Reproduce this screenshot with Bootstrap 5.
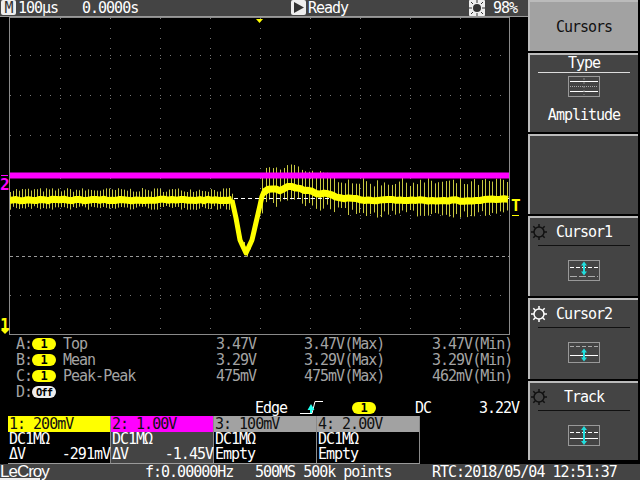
<!DOCTYPE html>
<html lang="en">
<head>
    <meta charset="UTF-8">
    <meta name="viewport" content="width=device-width, initial-scale=1">
    <title>Oscilloscope - Cursors</title>
    <link href="https://cdn.jsdelivr.net/npm/bootstrap@5.3.0/dist/css/bootstrap.min.css" rel="stylesheet">
    <style>
        body {
            margin: 0;
            background: #000;
            color: #fff;
            font-family: "DejaVu Sans Mono", "Liberation Mono", monospace;
            font-size: 15px;
            letter-spacing: -1px;
            line-height: 16px;
            overflow: hidden;
        }

        .sc-screen { width: 640px; height: 480px; overflow: hidden; }
        .sc-upper { height: 464px; }
        .sc-left { width: 528px; }
        .sc-nowrap { white-space: nowrap; }

        /* Top bar */
        .sc-topbar {
            height: 17px;
            padding-left: 1px;
            background: #444;
            border-bottom: 1px solid #9a9a9a;
        }
        .sc-tag {
            width: 15px;
            height: 15px;
            background: #eee;
            border-radius: 2px;
            color: #333;
        }
        .sc-tb-time { width: 64px; margin-left: 2px; }
        .sc-tb-pos { width: 209px; }
        .sc-tb-run { width: 161px; margin-left: 2px; }
        .sc-tb-pct { margin-left: 8px; }

        .sc-plot { display: block; width: 528px; height: 318px; flex: none; }
        .sc-plot text { font-family: "DejaVu Sans Mono", monospace; font-size: 16px; font-weight: 700; }

        /* Measurements */
        .sc-meas {
            display: grid;
            grid-template-columns: 16px 31px 153px 88px 128px 1fr;
            grid-auto-rows: 16px;
            padding: 1px 0 0 16px;
            color: #a4a4a4;
            height: 65px;
        }
        .sc-pill {
            display: block;
            width: 24px;
            height: 12px;
            margin-top: 2px;
            border-radius: 6px;
            background: #ff0;
            color: #000;
            text-align: center;
            font-size: 12px;
            letter-spacing: 0;
            line-height: 12px;
            font-weight: 700;
        }
        .sc-pill-off { background: #eee; font-size: 10.5px; letter-spacing: -1px; }

        /* Trigger row */
        .sc-trig { height: 16px; padding-left: 255px; }
        .sc-trig-edge { width: 45px; }
        .sc-trig-icon { width: 52px; }
        .sc-trig-pill { width: 63px; }
        .sc-trig-dc { width: 64px; }

        /* Channel boxes */
        .sc-channels { padding-left: 8px; }
        .sc-ch {
            width: 103px;
            height: 48px;
            border-right: 1px solid #8a8a8a;
            border-bottom: 1px solid #9a9a9a;
        }
        .sc-ch-head { height: 16px; color: #111; padding-left: 1px; }
        .sc-ch-line { height: 15px; line-height: 15px; padding-left: 1px; }
        .sc-c1 { background: #ff0; }
        .sc-c2 { background: #f0f; }
        .sc-c3 { background: #a2a2a2; }
        .sc-dim { background: #444; }

        /* Softkeys */
        .sc-side { width: 112px; padding: 0 2px 0 0; gap: 2px; }
        .sc-key {
            height: 80px;
            background: #444;
            border-top: 2px solid #bbb;
            border-left: 2px solid #bbb;
            position: relative;
        }
        .sc-key-short { height: 79px; }
        .sc-key-tall { height: 81px; }
        .sc-key-active {
            height: 51px;
            background: #a2a2a2;
            color: #111;
        }
        .sc-key-title { height: 17px; }
        .sc-key-title-low { height: 27px; padding-top: 6px; }
        .sc-key-rule { height: 1px; margin: 0 8px; background: #111; }
        .sc-key-rule-w { background: #ddd; }
        .sc-key-gear { position: absolute; left: 0; top: 5px; }
        .sc-key-icon { display: block; margin: 3px auto 0; }
        .sc-key-icon-low { margin-top: 14px; }
        .sc-key-value { margin-top: 10px; }

        /* Status bar */
        .sc-status { height: 16px; background: #444; }
        .sc-logo {
            width: 145px;
            font-family: "Liberation Sans", sans-serif;
            font-size: 17px;
            letter-spacing: -1px;
            line-height: 15px;
            height: 16px;
            position: relative;
        }
        .sc-logo::after {
            content: "";
            position: absolute;
            left: 0;
            bottom: 0;
            width: 40px;
            height: 2px;
            background: #eee;
        }
        .sc-st-f { width: 110px; }
        .sc-st-s { width: 177px; }
    </style>
</head>
<body>

<div class="sc-screen d-flex flex-column">
    <div class="sc-upper d-flex">
        <div class="sc-left d-flex flex-column">
            <!-- Top bar -->
            <div class="sc-topbar d-flex align-items-start sc-nowrap">
                <span class="sc-tag d-flex align-items-center justify-content-center">M</span>
                <span class="sc-tb-time">100μs</span>
                <span class="sc-tb-pos">0.0000s</span>
                <span class="sc-tag d-flex align-items-center justify-content-center">
                    <svg width="13" height="13" viewBox="0 0 13 13"><path d="M2 1 L12 6.5 L2 12 Z" fill="#333"/></svg>
                </span>
                <span class="sc-tb-run">Ready</span>
                <svg width="16" height="16" viewBox="0 0 16 16">
                    <rect width="16" height="16" fill="#eee" rx="1"/>
                    <circle cx="8" cy="8" r="4" fill="#333"/>
                    <path d="M8 0v3M8 13v3M0 8h3M13 8h3M2 2l2 2M12 12l2 2M14 2l-2 2M4 12l-2 2" stroke="#333" stroke-width="1"/>
                </svg>
                <span class="sc-tb-pct">98%</span>
            </div>

            <!-- Graticule and traces -->
            <svg id="plot" class="sc-plot" viewBox="0 17 528 318">
                <g id="grid"></g>
                <g id="spikes"></g>
                <line x1="10" y1="198.5" x2="510" y2="198.5" stroke="#fff" stroke-dasharray="4 3"/>
                <line x1="10" y1="256.5" x2="510" y2="256.5" stroke="#999" stroke-dasharray="3 3"/>
                <path id="trace" fill="none" stroke="#ff0" stroke-width="7" stroke-linejoin="round"/>
                <path id="dip" fill="none" stroke="#ff0" stroke-width="5" stroke-linejoin="round"/>
                <rect x="10" y="172.500" width="500" height="6" fill="#f0f"/>
                <rect x="9.5" y="17.5" width="500" height="317" fill="none" stroke="#8a8a8a"/>
                <path d="M256 19 h7 l-3.500 4 Z" fill="#ff0"/>
                <rect x="1" y="175" width="7" height="1" fill="#f0f"/>
                <text x="0" y="190" fill="#f0f">2</text>
                <text x="0" y="330" fill="#ff0">1</text>
                <path d="M1 330 h8 l-4 4 Z" fill="#ff0"/>
                <text x="511" y="211" fill="#ff0">T</text>
                <rect x="512" y="215" width="7" height="1" fill="#ff0"/>
            </svg>

            <!-- Measurements -->
            <div class="sc-meas sc-nowrap">
                <span>A:</span><span class="sc-pill">1</span><span>Top</span><span>3.47V</span><span>3.47V(Max)</span><span>3.47V(Min)</span>
                <span>B:</span><span class="sc-pill">1</span><span>Mean</span><span>3.29V</span><span>3.29V(Max)</span><span>3.29V(Min)</span>
                <span>C:</span><span class="sc-pill">1</span><span>Peak-Peak</span><span>475mV</span><span>475mV(Max)</span><span>462mV(Min)</span>
                <span>D:</span><span class="sc-pill sc-pill-off">Off</span><span></span><span></span><span></span><span></span>
            </div>

            <!-- Trigger -->
            <div class="sc-trig d-flex sc-nowrap">
                <span class="sc-trig-edge">Edge</span>
                <span class="sc-trig-icon">
                    <svg class="d-block" width="24" height="16" viewBox="0 0 24 16">
                        <path d="M0 13.500 H12 L15 1.500 H23" fill="none" stroke="#fff"/>
                        <path d="M7.500 10 L11 4 L14.500 10 Z M10 10 h2 v3 h-2 Z" fill="#2fe"/>
                    </svg>
                </span>
                <span class="sc-trig-pill"><span class="sc-pill">1</span></span>
                <span class="sc-trig-dc">DC</span>
                <span>3.22V</span>
            </div>

            <!-- Channels -->
            <div class="sc-channels d-flex sc-nowrap">
                <div class="sc-ch">
                    <div class="sc-ch-head sc-c1">1: 200mV</div>
                    <div class="sc-ch-line">DC1MΩ</div>
                    <div class="sc-ch-line d-flex justify-content-between"><span>ΔV</span><span>-291mV</span></div>
                </div>
                <div class="sc-ch sc-dim">
                    <div class="sc-ch-head sc-c2">2: 1.00V</div>
                    <div class="sc-ch-line">DC1MΩ</div>
                    <div class="sc-ch-line d-flex justify-content-between"><span>ΔV</span><span>-1.45V</span></div>
                </div>
                <div class="sc-ch">
                    <div class="sc-ch-head sc-c3">3: 100mV</div>
                    <div class="sc-ch-line">DC1MΩ</div>
                    <div class="sc-ch-line">Empty</div>
                </div>
                <div class="sc-ch">
                    <div class="sc-ch-head sc-c3">4: 2.00V</div>
                    <div class="sc-ch-line">DC1MΩ</div>
                    <div class="sc-ch-line">Empty</div>
                </div>
            </div>
        </div>

        <!-- Softkeys -->
        <div class="sc-side d-flex flex-column text-center">
            <div class="sc-key sc-key-active d-flex align-items-center justify-content-center">Cursors</div>
            <div class="sc-key sc-key-short">
                <div class="sc-key-title">Type</div>
                <div class="sc-key-rule sc-key-rule-w"></div>
                <svg class="sc-key-icon" width="32" height="21" viewBox="0 0 32 21">
                    <rect x=".5" y=".5" width="31" height="20" fill="none" stroke="#999"/>
                    <path d="M2 5.500h28M2 15.500h28" stroke="#fff"/>
                    <path d="M2 10.500h28" stroke="#aaa" stroke-dasharray="1 1"/>
                    <path d="M16 2v17" stroke="#888" stroke-dasharray="2 2"/>
                </svg>
                <div class="sc-key-value">Amplitude</div>
            </div>
            <div class="sc-key"></div>
            <div class="sc-key">
                <svg class="sc-key-gear" width="18" height="18" viewBox="0 0 18 18"><use href="#gear" stroke="#111"/></svg>
                <div class="sc-key-title-low">Cursor1</div>
                <div class="sc-key-rule"></div>
                <svg class="sc-key-icon sc-key-icon-low" width="32" height="21" viewBox="0 0 32 21">
                    <rect x=".5" y=".5" width="31" height="20" fill="none" stroke="#999"/>
                    <path d="M2 7.500h28" stroke="#fff" stroke-dasharray="4 2"/>
                    <path d="M2 16.500h28" stroke="#aaa" stroke-dasharray="7 2"/>
                    <path d="M16 3v11" stroke="#2dd" stroke-width="2"/>
                    <path d="M13 5.500 L16 1.500 L19 5.500 Z M13 11.500 L16 15.500 L19 11.500 Z" fill="#2dd"/>
                </svg>
            </div>
            <div class="sc-key sc-key-tall">
                <svg class="sc-key-gear" width="18" height="18" viewBox="0 0 18 18"><use href="#gear" stroke="#fff"/></svg>
                <div class="sc-key-title-low">Cursor2</div>
                <div class="sc-key-rule"></div>
                <svg class="sc-key-icon sc-key-icon-low" width="32" height="21" viewBox="0 0 32 21">
                    <rect x=".5" y=".5" width="31" height="20" fill="none" stroke="#999"/>
                    <path d="M2 4.500h28" stroke="#aaa" stroke-dasharray="4 2"/>
                    <path d="M2 13.500h28" stroke="#fff"/>
                    <path d="M16 9v8" stroke="#2dd" stroke-width="2"/>
                    <path d="M13 10.500 L16 6.500 L19 10.500 Z M13 15.500 L16 19.500 L19 15.500 Z" fill="#2dd"/>
                </svg>
            </div>
            <div class="sc-key sc-key-short">
                <svg class="sc-key-gear" width="18" height="18" viewBox="0 0 18 18"><use href="#gear" stroke="#111"/></svg>
                <div class="sc-key-title-low">Track</div>
                <div class="sc-key-rule"></div>
                <svg class="sc-key-icon sc-key-icon-low" width="32" height="21" viewBox="0 0 32 21">
                    <rect x=".5" y=".5" width="31" height="20" fill="none" stroke="#999"/>
                    <path d="M2 7.500h28" stroke="#fff" stroke-dasharray="4 2"/>
                    <path d="M2 13.500h28" stroke="#fff"/>
                    <path d="M16 3v15" stroke="#2dd" stroke-width="2"/>
                    <path d="M13 5 L16 1 L19 5 Z M13 16 L16 20 L19 16 Z" fill="#2dd"/>
                </svg>
            </div>
        </div>
    </div>

    <!-- Status bar -->
    <div class="sc-status d-flex sc-nowrap">
        <span class="sc-logo">LeCroy</span>
        <span class="sc-st-f">f:0.00000Hz</span>
        <span class="sc-st-s">500MS 500k points</span>
        <span>RTC:2018/05/04 12:51:37</span>
    </div>
</div>

<svg width="0" height="0" class="position-absolute">
    <defs>
        <g id="gear" fill="none" stroke-width="1.500">
            <circle cx="9" cy="9" r="5"/>
            <path d="M9 1v3M9 14v3M1 9h3M14 9h3M3.300 3.300l2 2M12.700 12.700l2 2M14.700 3.300l-2 2M5.300 12.700l-2 2"/>
        </g>
    </defs>
</svg>

<script>
    // Graticule
    let grid = "";
    for (let x = 60; x < 510; x += 50) {
        grid += `<line x1="${x}.5" y1="18" x2="${x}.5" y2="334" stroke="#777" stroke-dasharray="1 9"/>`;
    }
    for (let y = 55; y < 334; y += 40) {
        if (y === 255) continue;
        grid += `<line x1="10" y1="${y}.5" x2="510" y2="${y}.5" stroke="#777" stroke-dasharray="1 9"/>`;
    }
    document.getElementById("grid").innerHTML = grid;

    // Trace centre line, points read off the picture
    const points = [[10, 200], [232, 200], [236, 218], [240, 240], [246, 253], [252, 240], [258, 214],
                    [263, 192], [270, 188], [280, 190], [290, 185], [300, 189], [312, 192], [330, 195],
                    [345, 198], [370, 201], [400, 200], [430, 200], [470, 201], [510, 199]];
    function centre(x) {
        for (let i = 1; i < points.length; i++) {
            if (x <= points[i][0]) {
                let a = points[i - 1], b = points[i];
                return a[1] + (b[1] - a[1]) * (x - a[0]) / (b[0] - a[0]);
            }
        }
        return 199;
    }

    let seed = 7;
    function rnd() {
        seed = (seed * 16807) % 2147483647;
        return seed / 2147483647;
    }

    // Ripple spikes: tighter on the left of the dip, longer and wider apart after it
    let spikes = "";
    let x = 10;
    while (x < 510) {
        let px = Math.round(x) + 0.5;
        let up, down;
        if (x < 232) {
            up = 8 + rnd() * 4; down = 6 + rnd() * 4;
        } else if (x < 262) {
            up = 4 + rnd() * 3; down = 4 + rnd() * 3;
        } else if (x < 320) {
            up = 18 + rnd() * 5; down = 10 + rnd() * 8;
        } else {
            up = 14 + rnd() * 8; down = 10 + rnd() * 7;
        }
        let y = centre(x);
        spikes += `<line x1="${px}" y1="${y - up}" x2="${px}" y2="${y + down}" stroke="#c8c840"/>`;
        x += x < 262 ? 3 : 3.6;
    }
    document.getElementById("spikes").innerHTML = spikes;

    let band = "M10 200", dip = "M232 200";
    for (let i = 12; i <= 232; i += 4) band += ` L${i} ${centre(i) + rnd() * 1.6 - 0.8}`;
    for (let i = 232; i <= 264; i += 2) dip += ` L${i} ${centre(i)}`;
    document.getElementById("dip").setAttribute("d", dip);
    band += " M262 192";
    for (let i = 264; i <= 510; i += 4) band += ` L${i} ${centre(i) + rnd() * 2 - 1}`;
    document.getElementById("trace").setAttribute("d", band);
</script>

<script src="https://cdn.jsdelivr.net/npm/bootstrap@5.3.0/dist/js/bootstrap.bundle.min.js"></script>
</body>
</html>
